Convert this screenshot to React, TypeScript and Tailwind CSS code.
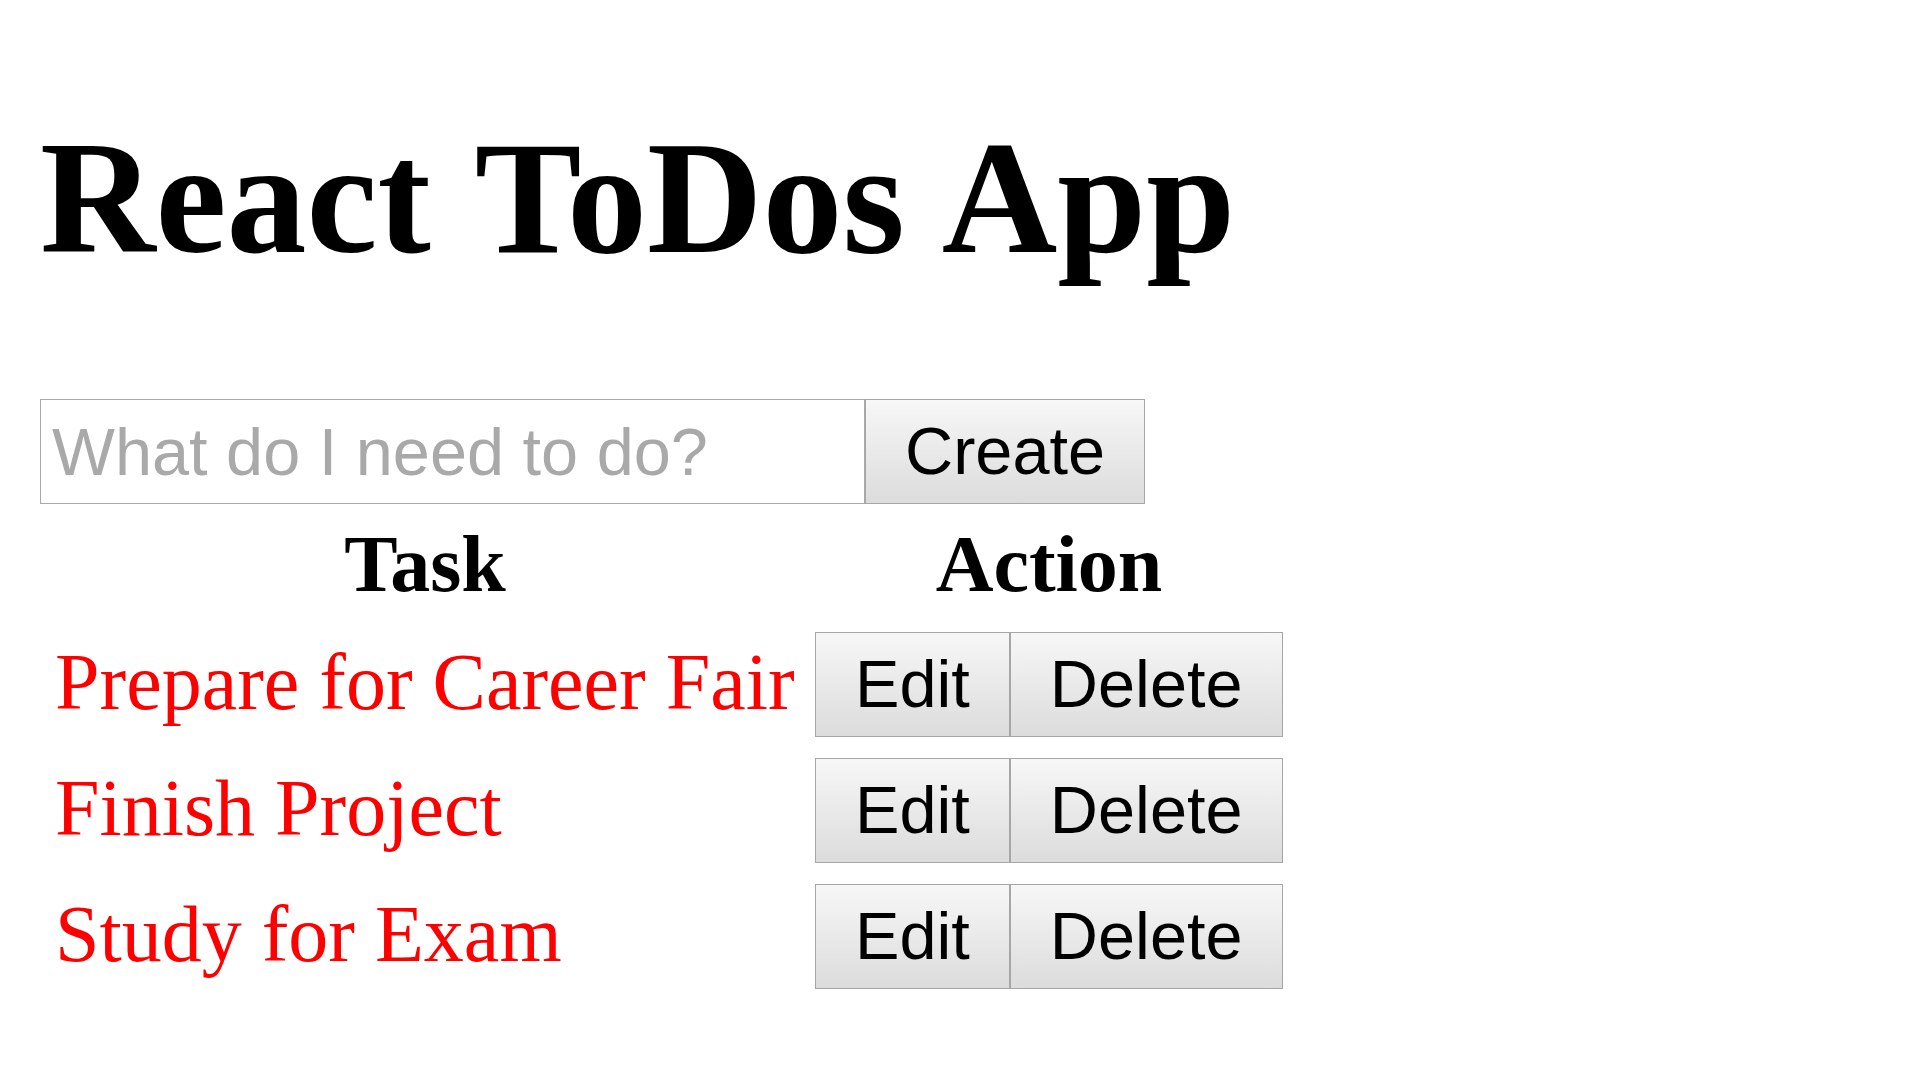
export default function App() {
  const tasks = ["Prepare for Career Fair", "Finish Project", "Study for Exam"];
  const btn =
    "h-[105px] border border-[#a6a6a6] bg-linear-to-b from-[#f7f7f7] to-[#dcdcdc] px-[39px] font-['Liberation_Sans',Arial,sans-serif] text-[66.67px] leading-[77px] text-black";
  return (
    <div className="min-h-screen bg-white pl-[40px] pt-[110px] font-['Liberation_Serif','Times_New_Roman',serif] text-black">
      <h1 className="text-[160px] font-bold leading-[177px] whitespace-nowrap">
        React <span className="ml-[4px]">ToDos</span> <span className="-ml-[3px]">App</span>
      </h1>
      <div className="mt-[112px] flex">
        <input
          placeholder="What do I need to do?"
          className="h-[105px] w-[825px] border border-[#a9a9a9] bg-white pl-[11px] font-['Liberation_Sans',Arial,sans-serif] text-[66.67px] text-black outline-none placeholder:text-[#a9a9a9]"
        />
        <button className={btn}>Create</button>
      </div>
      <div className="ml-[15px] mt-[16px] flex flex-col">
        <div className="grid grid-cols-[740px_468px] gap-x-[20px] text-[80px] font-bold leading-[89px]">
          <div className="text-center">Task</div>
          <div className="text-center">Action</div>
        </div>
        <div className="mt-[23px] flex flex-col gap-[21px]">
          {tasks.map((t) => (
            <div key={t} className="grid grid-cols-[740px_468px] items-start gap-x-[20px]">
              <div className="whitespace-nowrap pt-[6px] text-[80px] leading-[89px] text-[#ff0000]">{t}</div>
              <div className="flex">
                <button className={btn}>Edit</button>
                <button className={btn}>Delete</button>
              </div>
            </div>
          ))}
        </div>
      </div>
    </div>
  );
}
